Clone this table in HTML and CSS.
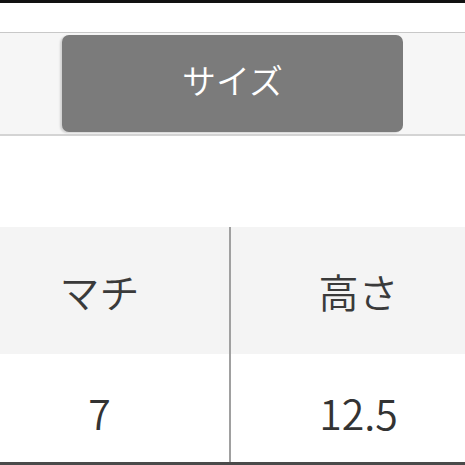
FILE: index.html
```html
<!DOCTYPE html>
<html lang="ja">
<head>
<meta charset="utf-8">
<link rel="stylesheet" href="styles.css">
</head>
<body>
<div class="topbar"></div>
<div class="tabs">
  <div class="tab-side"></div>
  <div class="tab-active">サイズ</div>
  <div class="tab-side"></div>
</div>
<div class="spacer"></div>
<table class="size-table">
  <tr class="head">
    <td class="c1">マチ</td>
    <td class="c2">高さ</td>
  </tr>
  <tr class="data">
    <td class="c1">7</td>
    <td class="c2">12.5</td>
  </tr>
</table>
</body>
</html>
```

FILE: styles.css
```css
html, body {
  margin: 0;
  padding: 0;
  background: #ffffff;
  width: 465px;
  height: 465px;
  overflow: hidden;
  font-family: "Noto Sans CJK JP", "Noto Sans", sans-serif;
  font-weight: 350;
  color: #333;
}
.topbar {
  height: 3px;
  background: #111;
}
.tabs {
  margin-top: 29px;
  border-top: 1px solid #c8c8c8;
  border-bottom: 2px solid #d4d4d4;
  background: #f6f6f6;
  display: flex;
  align-items: center;
  box-sizing: border-box;
  height: 104px;
}
.tab-side {
  flex: 1;
}
.tab-active {
  width: 341px;
  height: 97px;
  flex: none;
  margin-left: 62px;
  margin-right: 62px;
  background: #7b7b7b;
  border-radius: 7px;
  color: #ffffff;
  font-size: 34px;
  display: flex;
  align-items: center;
  justify-content: center;
  padding-bottom: 8px;
  box-sizing: border-box;
  box-shadow: -2px 1px 2px rgba(0,0,0,0.15);
}
.spacer {
  height: 91px;
}
.size-table {
  border-collapse: collapse;
  margin-left: -30px;
  width: 516px;
  table-layout: fixed;
}
.size-table td {
  text-align: center;
  padding: 0;
  font-size: 41px;
}
.size-table .c1 {
  width: 259px;
  border-right: 2px solid #a0a0a0;
}
.head td {
  background: #f4f4f4;
  height: 127px;
  color: #3a3a3a;
  font-size: 40px;
}
.data td {
  background: #ffffff;
  height: 100px;
  padding-top: 8px;
  border-bottom: 3px solid #4a4a4a;
  color: #333;
}
```
